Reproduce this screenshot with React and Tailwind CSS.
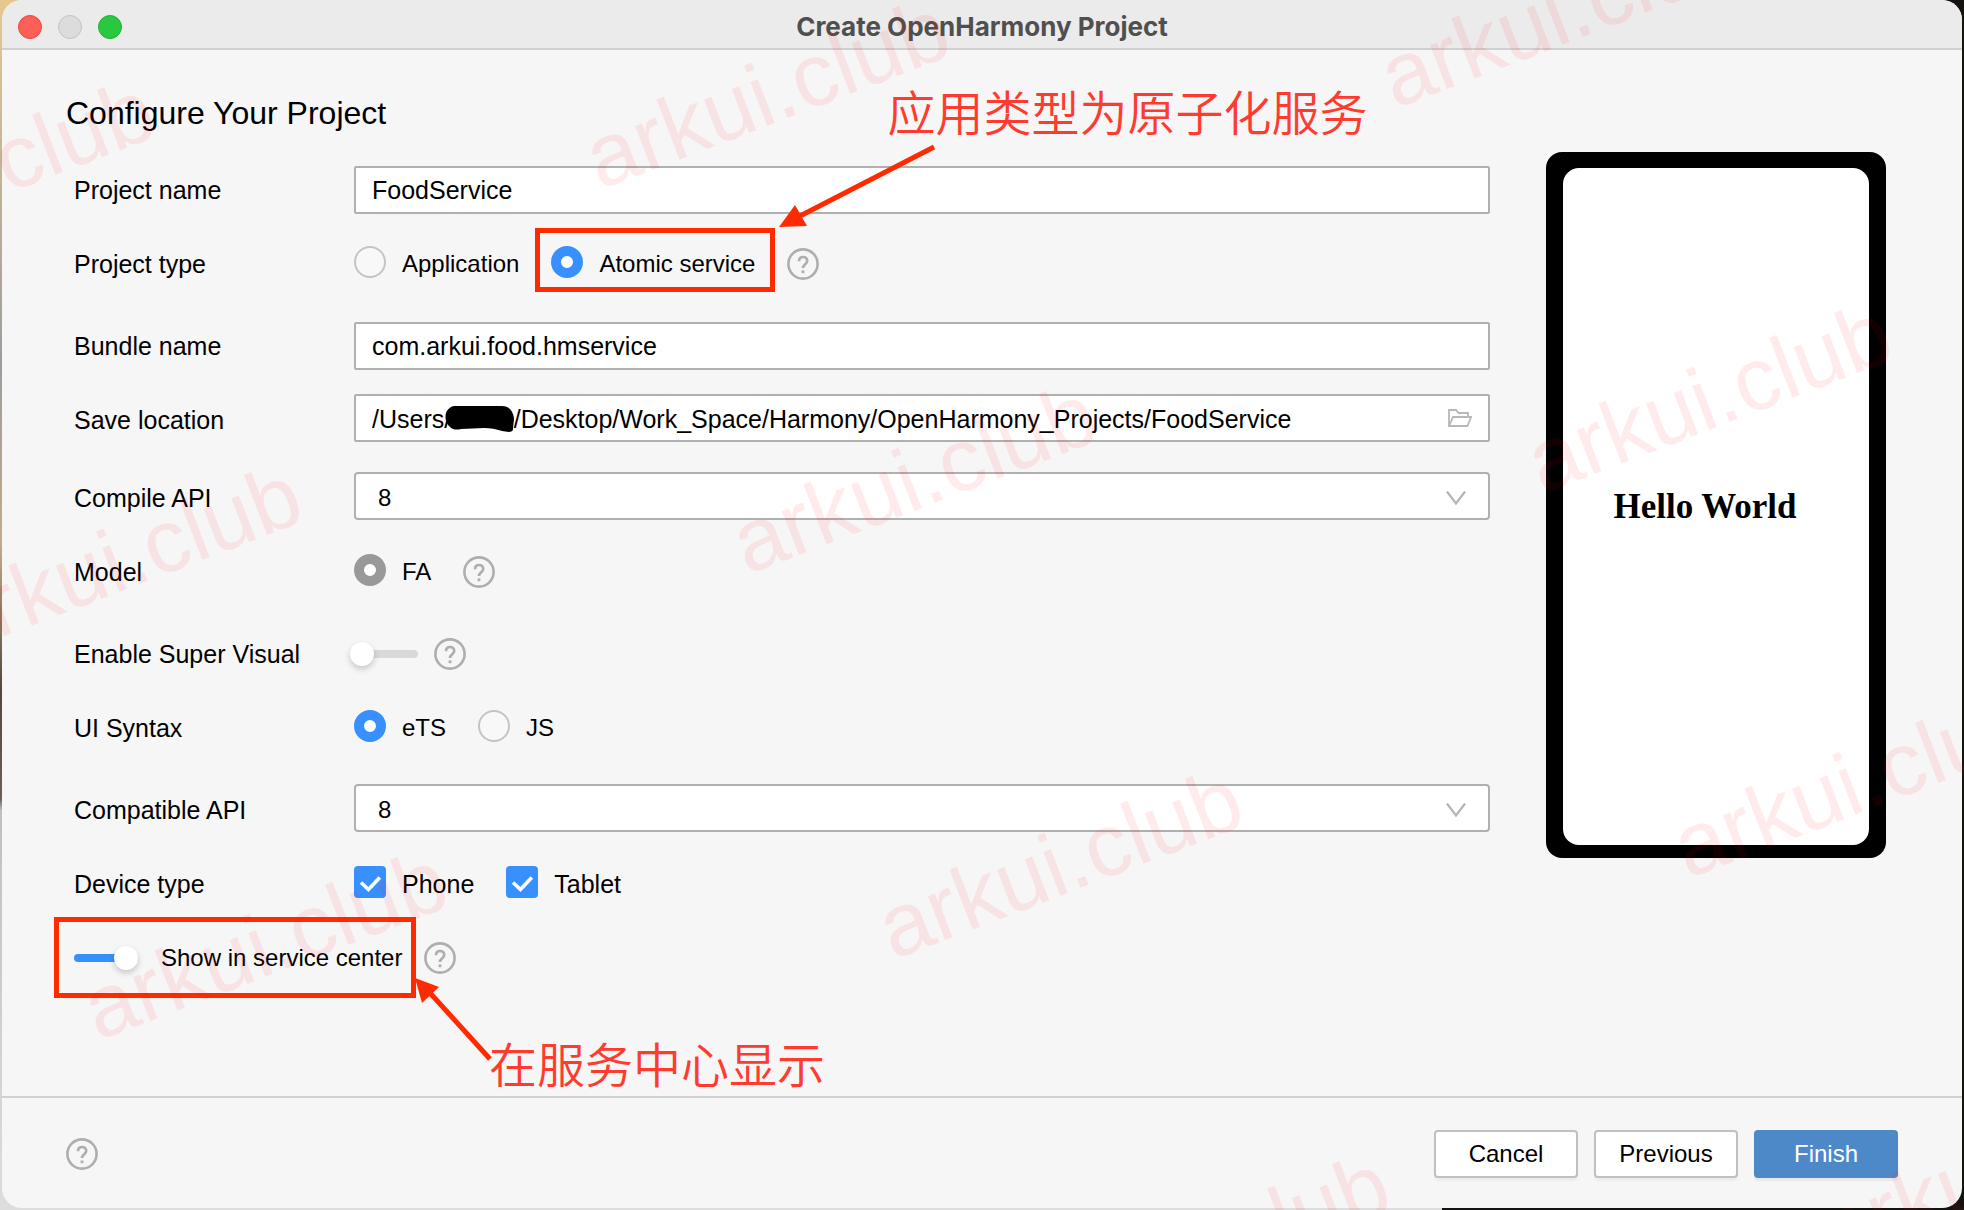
import { useState } from 'react';

// baseline origin of every watermark on the canvas
const watermarks = [
  [-195, 271],
  [-48, 656],
  [98, 1041],
  [600, 190],
  [747, 575],
  [893, 960],
  [1040, 1345],
  [1395, 109],
  [1542, 494],
  [1688, 879],
  [1834, 1264],
];

function HelpIcon({ label, className = '' }) {
  return (
    <button type="button" aria-label={label} className={`h-8 w-8 shrink-0 ${className}`}>
      <svg viewBox="0 0 32 32" fill="none" stroke="#aeaeae" className="h-8 w-8">
        <circle cx="16" cy="16" r="14.6" strokeWidth="2.6" />
        <path d="M12 13.2c0-2.600 1.700-4.200 4.100-4.200s4.100 1.600 4.100 3.900c0 3.200-4.200 3.500-4.200 7" strokeWidth="2.700" />
        <path d="M16 22.400v2.800" strokeWidth="2.800" />
      </svg>
    </button>
  );
}

function Row({ label, htmlFor, labelClass = 'pt-1', className = '', children }) {
  return (
    <div className={`flex h-12 items-center ${className}`}>
      {htmlFor ? (
        <label htmlFor={htmlFor} className={`w-[280px] shrink-0 text-[25px] leading-8 ${labelClass}`}>
          {label}
        </label>
      ) : (
        <span className={`w-[280px] shrink-0 text-[25px] leading-8 ${labelClass}`}>{label}</span>
      )}
      {children}
    </div>
  );
}

function Radio({ label, ...props }) {
  return (
    <label className="flex items-center gap-4 text-2xl leading-8">
      <input
        type="radio"
        className="h-8 w-8 appearance-none rounded-full border-2 border-[#c4c4c4] bg-[#f8f8f8] checked:border-[10px] checked:border-[#3890ff] checked:bg-white disabled:border-[#999999]"
        {...props}
      />
      <span className="pt-1">{label}</span>
    </label>
  );
}

function Checkbox({ label }) {
  return (
    <label className="flex items-center gap-4 text-[25px] leading-8">
      <span className="relative h-8 w-8">
        <input
          type="checkbox"
          defaultChecked
          className="peer block h-8 w-8 appearance-none rounded border-2 border-[#c4c4c4] checked:border-[#3890ff] checked:bg-[#3890ff]"
        />
        <svg
          viewBox="0 0 32 32"
          fill="none"
          stroke="white"
          strokeWidth="3.6"
          className="pointer-events-none absolute inset-0 hidden peer-checked:block"
        >
          <path d="M7 16.5l7.4 7L25.8 11.4" />
        </svg>
      </span>
      <span className="pt-1">{label}</span>
    </label>
  );
}

function Switch(props) {
  return (
    <input
      type="checkbox"
      role="switch"
      className="relative h-2 w-16 shrink-0 appearance-none rounded-full bg-[#d9d9d9] before:absolute before:-top-2 before:-left-1 before:h-6 before:w-6 before:rounded-full before:bg-white before:shadow-[0_3px_6px_rgba(0,0,0,0.2)] checked:bg-[#3890ff] checked:before:left-10"
      {...props}
    />
  );
}

function ApiSelect({ id }) {
  return (
    <div className="relative flex-1">
      <select
        id={id}
        className="block h-12 w-full appearance-none rounded border-2 border-[#b0b0b0] bg-white pt-[3px] pl-[22px] text-2xl leading-8 outline-none"
      >
        <option>8</option>
      </select>
      <svg
        viewBox="0 0 20 14"
        fill="none"
        stroke="#b4b4b4"
        strokeWidth="2.2"
        className="pointer-events-none absolute top-[19px] right-6 h-3.5 w-5"
      >
        <path d="M1 .5l9 12 9-12" />
      </svg>
    </div>
  );
}

function PhonePreview() {
  return (
    <div className="flex h-[706px] w-[340px] shrink-0 rounded-2xl bg-black px-[17px] pt-4 pb-[13px]">
      <div className="flex flex-1 justify-center rounded-2xl bg-white pt-[317px] pr-[22px]">
        <p className="font-['Liberation_Serif',serif] text-[35px] leading-[44px] font-bold">Hello World</p>
      </div>
    </div>
  );
}

const fieldClass =
  'block h-12 w-full flex-1 rounded-xs border-2 border-[#b0b0b0] bg-white px-4 text-[25px] leading-8 outline-none';

const buttonClass =
  'h-12 w-36 rounded border-2 border-[#c0c0c0] bg-white text-2xl leading-8 shadow-[0_3px_2px_rgba(0,0,0,0.04)]';

const captionClass =
  'pointer-events-none absolute text-5xl leading-[60px] font-[350] whitespace-nowrap text-[#ff3b30]';

export default function App() {
  const [projectName, setProjectName] = useState('FoodService');
  const [bundleName, setBundleName] = useState('com.arkui.food.hmservice');
  const [location, setLocation] = useState(
    '/Users/         /Desktop/Work_Space/Harmony/OpenHarmony_Projects/FoodService',
  );

  return (
    <div className="relative flex min-h-screen flex-col overflow-hidden bg-[linear-gradient(to_bottom,#e6c88f,#9d9d9d_30%,#c4aa88_45%,#55483a_57%,#6b6057_66%,#c0c0c0_67%,#dddddd)] px-[2px] pb-[2px] font-['Liberation_Sans','Noto_Sans_CJK_SC',sans-serif] text-black">
      {/* Desktop showing at the right edge */}
      <div className="absolute inset-y-0 right-0 w-[522px] bg-[#14130f]" />

      <div className="relative flex flex-1 flex-col overflow-hidden rounded-[20px] bg-[#f6f6f6]">
        {/* Title bar */}
        <header className="relative flex h-[50px] items-center border-b-2 border-[#d0d0d0] bg-[#ebebeb] px-4 pt-[6px]">
          <div className="flex gap-4">
            <button type="button" aria-label="Close" className="h-6 w-6 rounded-full border border-[#e2493f] bg-[#ff5f57]" />
            <button type="button" aria-label="Minimize" className="h-6 w-6 rounded-full border border-[#c2c2c2] bg-[#dcdcdc]" />
            <button type="button" aria-label="Zoom" className="h-6 w-6 rounded-full border border-[#1eb133] bg-[#28c940]" />
          </div>
          <h1 className="flex-1 pr-[104px] text-center font-['Inter',sans-serif] text-[26px] leading-8 font-bold text-[#4f4f4f]">
            Create OpenHarmony Project
          </h1>
        </header>

        <main className="flex flex-1 gap-14 pr-[76px] pl-16">
          <form id="project-form" className="flex-1 pt-[43px]">
            <h2 className="mb-[33px] text-[32px] leading-10">Configure Your Project</h2>

            <div className="pl-2">
              <Row label="Project name" htmlFor="project-name" labelClass="pt-0">
                <input
                  id="project-name"
                  value={projectName}
                  onChange={(e) => setProjectName(e.target.value)}
                  className={fieldClass}
                />
              </Row>

              <Row label="Project type" className="mt-6">
                <div className="flex items-center gap-8">
                  <Radio label="Application" name="type" />
                  <div className="relative">
                    <Radio label="Atomic service" name="type" defaultChecked />
                    {/* Callout for the project type */}
                    <div className="pointer-events-none absolute -top-4 -right-5 -bottom-3 -left-4 border-[5px] border-[#ff2a00]" />
                    <svg viewBox="0 0 160 84" className="pointer-events-none absolute bottom-[53px] left-[227px] h-[84px] w-40">
                      <path d="M156 4L22 73" stroke="#ff2a00" strokeWidth="5" />
                      <path d="M1 84l16-22 12 21z" fill="#ff2a00" />
                    </svg>
                    <p className={`bottom-[135px] left-[336px] ${captionClass}`}>应用类型为原子化服务</p>
                  </div>
                  <HelpIcon label="About project type" className="mt-1" />
                </div>
              </Row>

              <Row label="Bundle name" htmlFor="bundle-name" labelClass="pt-0" className="mt-9">
                <input
                  id="bundle-name"
                  value={bundleName}
                  onChange={(e) => setBundleName(e.target.value)}
                  className={fieldClass}
                />
              </Row>

              <Row label="Save location" htmlFor="save-location" className="mt-6">
                <div className="relative flex-1">
                  <input
                    id="save-location"
                    value={location}
                    onChange={(e) => setLocation(e.target.value)}
                    className={`pt-[3px] ${fieldClass}`}
                  />
                  <svg viewBox="0 0 70 28" className="pointer-events-none absolute top-3 left-[91px] h-7 w-[70px]">
                    <path d="M9 0h48c7 0 11 5 12 12 0 4-1 7-1 11 0 4-6 3-11 2-6-2-12-3-18-3-8 0-15 1-23 1-4 1-8 1-11-2C-2 15-1 2 9 0z" />
                  </svg>
                  <button type="button" aria-label="Browse" className="absolute top-[14px] right-[18px] h-5 w-6">
                    <svg viewBox="0 0 24 20" fill="none" stroke="#b8b8b8" strokeWidth="1.8" className="h-5 w-6">
                      <path d="M1 18V2h7l2.500 3H20v4M1.200 18L5 9h18l-3.500 9z" />
                    </svg>
                  </button>
                </div>
              </Row>

              <Row label="Compile API" htmlFor="compile-api" className="mt-[30px]">
                <ApiSelect id="compile-api" />
              </Row>

              <Row label="Model" className="mt-[26px]">
                <div className="flex items-center gap-8">
                  <label className="flex items-center gap-4 text-2xl leading-8">
                    <input
                      type="radio"
                      name="model"
                      defaultChecked
                      disabled
                      className="h-8 w-8 appearance-none rounded-full border-[10px] border-[#999999] bg-white"
                    />
                    <span className="pt-1">FA</span>
                  </label>
                  <HelpIcon label="About model" className="mt-1" />
                </div>
              </Row>

              <Row label="Enable Super Visual" htmlFor="super-visual" labelClass="pt-0" className="mt-9">
                <div className="flex items-center gap-4">
                  <Switch id="super-visual" />
                  <HelpIcon label="About super visual" />
                </div>
              </Row>

              <Row label="UI Syntax" className="mt-6">
                <div className="flex items-center gap-8">
                  <Radio label="eTS" name="syntax" defaultChecked />
                  <Radio label="JS" name="syntax" />
                </div>
              </Row>

              <Row label="Compatible API" htmlFor="compatible-api" className="mt-[34px]">
                <ApiSelect id="compatible-api" />
              </Row>

              <Row label="Device type" className="mt-[26px]">
                <div className="flex items-center gap-8">
                  <Checkbox label="Phone" />
                  <Checkbox label="Tablet" />
                </div>
              </Row>

              <div className="mt-7 flex h-12 items-center gap-[22px]">
                <div className="relative">
                  <label className="flex items-center gap-[23px] text-2xl leading-8">
                    <Switch defaultChecked />
                    Show in service center
                  </label>
                  {/* Callout for the service center switch */}
                  <div className="pointer-events-none absolute -top-[25px] -right-[14px] -bottom-6 -left-5 border-[5px] border-[#ff2a00]" />
                  <svg viewBox="0 0 80 84" className="pointer-events-none absolute top-9 left-[340px] h-[84px] w-20">
                    <path d="M76 81L17 16" stroke="#ff2a00" strokeWidth="5" />
                    <path d="M1 0l24 9-17 16z" fill="#ff2a00" />
                  </svg>
                  <p className={`top-[95px] left-[415px] ${captionClass}`}>在服务中心显示</p>
                </div>
                <HelpIcon label="About service center" />
              </div>
            </div>
          </form>

          <aside className="pt-[102px]">
            <PhonePreview />
          </aside>
        </main>

        <footer className="flex h-28 items-center justify-between border-t-2 border-[#d0d0d0] px-16 pt-0.5">
          <HelpIcon label="Help" />
          <div className="flex gap-4">
            <button type="button" className={buttonClass}>
              Cancel
            </button>
            <button type="button" className={buttonClass}>
              Previous
            </button>
            <button
              type="submit"
              form="project-form"
              className="h-12 w-36 rounded bg-[#4d89c9] text-2xl leading-8 text-white shadow-[0_3px_2px_rgba(0,0,0,0.06)]"
            >
              Finish
            </button>
          </div>
        </footer>
      </div>

      {/* Watermarks */}
      <div className="pointer-events-none absolute inset-0 overflow-hidden" aria-hidden="true">
        {watermarks.map(([x, y]) => (
          <span
            key={`${x}-${y}`}
            className="absolute origin-[0_75px] -rotate-[21deg] text-[89px] leading-none whitespace-nowrap text-[#ff0000]/8"
            style={{ left: x, top: y - 75 }}
          >
            arkui.club
          </span>
        ))}
      </div>
    </div>
  );
}
